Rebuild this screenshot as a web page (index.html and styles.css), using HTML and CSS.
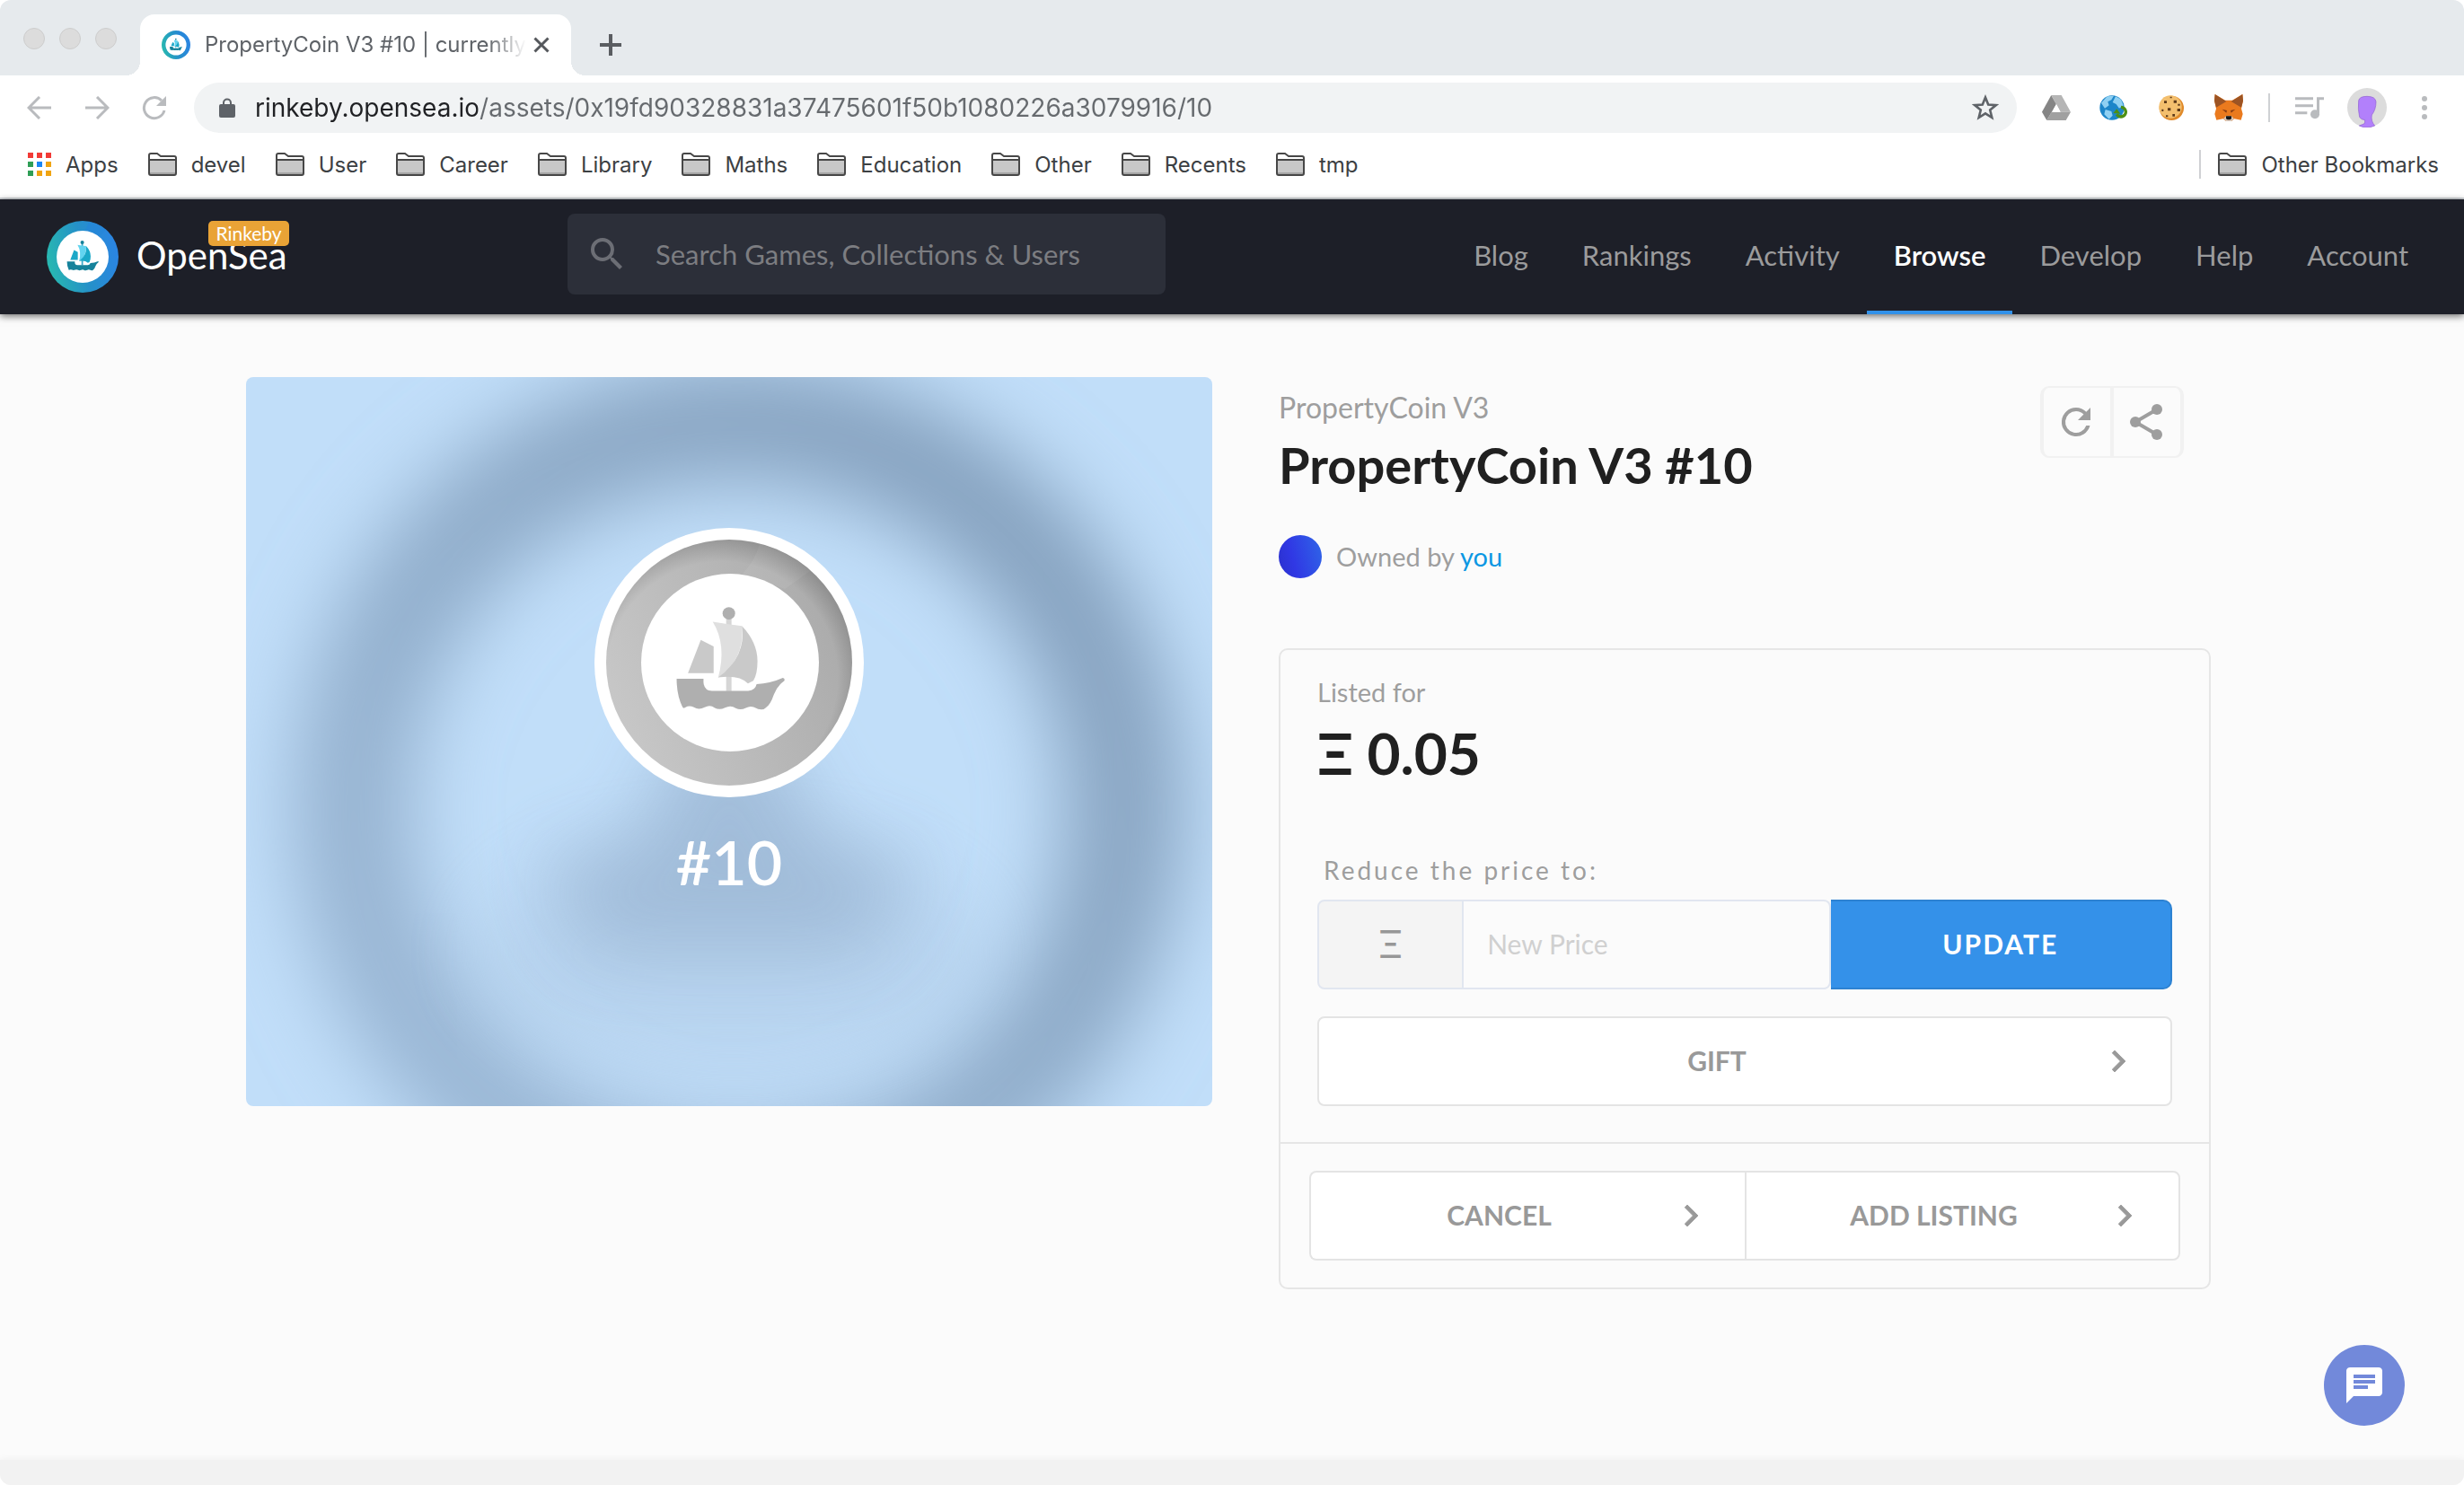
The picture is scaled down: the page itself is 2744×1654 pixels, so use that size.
FILE: index.html
```html
<!DOCTYPE html>
<html lang="en">
<head>
<meta charset="utf-8">
<meta name="viewport" content="width=device-width, initial-scale=1">
<title>PropertyCoin V3 #10 | OpenSea</title>
<link rel="stylesheet" href="styles.css">
</head>
<body>
<svg class="defs" aria-hidden="true">
  <symbol id="boat" viewBox="342 296 596 596">
    <path class="mast" d="M627 440h18v250h-18z"/>
    <circle class="hull" cx="636" cy="429" r="21"/>
    <path class="sail-light" d="M582 457q45 8 98 14q10 110-80 174q30-110-18-188z"/>
    <path class="sail" d="M680 471q52 55 52 118q0 45-14 66l-18 9q-30-30-100-20q95-70 80-173zM542 518l43 22v89h-86z"/>
    <path class="hull" d="M461 648h90v12q2 28 28 29h122q24-2 28-23q45-2 88-21q8 2 5 10q-25 18-35 46q-12 36-28 45q-12 12-38-2q-14-6-28 2q-18 9-34 1q-16-12-36-2q-18 9-34 1q-16-12-34-2q-20 10-36 0q-16-8-28 0q-6 5-10 0q-20-40-20-96z"/>
  </symbol>
  <symbol id="logo" viewBox="0 0 80 80">
    <circle cx="40" cy="40" r="40" fill="url(#ring)"/>
    <path d="M43 11L47 1A40 40 0 0 1 66 10L58 18z" fill="#2585d8" opacity=".6"/>
    <circle cx="40" cy="40" r="29" fill="#fff"/>
    <use href="#boat" x="11" y="11" width="58" height="58"/>
  </symbol>
  <symbol id="folder" viewBox="0 0 32 26">
    <path d="M1 23V3q0-2 2-2h7l4 3h15q2 0 2 2v17q0 2-2 2H3q-2 0-2-2z" fill="#fff"/>
    <path d="M2 8h28v16H2z" fill="#c8c8c8"/>
    <path d="M2 22h28v2H2z" fill="#a5a5a5"/>
    <path d="M1 8h30M1 23V3q0-2 2-2h7l4 3h15q2 0 2 2v17q0 2-2 2H3q-2 0-2-2z" fill="none" stroke="#474747" stroke-width="2"/>
  </symbol>
  <symbol id="chevron" viewBox="0 0 24 24">
    <path d="M8.6 16.6l4.6-4.6-4.6-4.6L10 6l6 6-6 6z" fill="currentColor" stroke="currentColor" stroke-width=".4"/>
  </symbol>
  <defs>
    <linearGradient id="ring" x1="0" y1=".6" x2="1" y2=".4">
      <stop offset="0" stop-color="#28b9b0"/><stop offset=".5" stop-color="#2591c8"/><stop offset="1" stop-color="#2b84e4"/>
    </linearGradient>
  </defs>
</svg>

<div class="window">
  <div class="tabstrip">
    <div class="lights"><i></i><i></i><i></i></div>
    <div class="tab">
      <svg class="favicon" width="32" height="32"><use href="#logo"/></svg>
      <span class="tab-title">PropertyCoin V3 #10 | currently</span>
      <button class="plain tab-close" aria-label="Close tab"><svg width="18" height="18" viewBox="0 0 18 18"><path d="M1.500 1.500l15 15M16.500 1.500l-15 15" stroke="#55585c" stroke-width="3"/></svg></button>
    </div>
    <button class="plain new-tab" aria-label="New tab"><svg width="24" height="24" viewBox="0 0 24 24"><path d="M12 0v24M0 12h24" stroke="#5a5d61" stroke-width="4"/></svg></button>
  </div>

  <div class="toolbar">
    <button class="plain tool" aria-label="Back"><svg width="28" height="26" viewBox="0 0 28 26" fill="none" stroke="#b9bbbe" stroke-width="3"><path d="M27 13H3M14 1L2 13l12 12"/></svg></button>
    <button class="plain tool" aria-label="Forward"><svg width="28" height="26" viewBox="0 0 28 26" fill="none" stroke="#b9bbbe" stroke-width="3"><path d="M1 13h24M14 1l12 12-12 12"/></svg></button>
    <button class="plain tool" aria-label="Reload"><svg width="28" height="28" viewBox="0 0 28 28"><path d="M25 17A11.500 11.500 0 1 1 22 6" fill="none" stroke="#b9bbbe" stroke-width="3"/><path d="M27 1v11H16z" fill="#b9bbbe"/></svg></button>
    <div class="address">
      <svg width="18" height="22" viewBox="0 0 18 22"><path d="M5 9V5.500a4 4 0 0 1 8 0V9" fill="none" stroke="#5f6368" stroke-width="2"/><rect y="7" width="18" height="15" rx="2" fill="#5f6368"/></svg>
      <input class="url" type="text" aria-label="Address" value="rinkeby.opensea.io/assets/0x19fd90328831a37475601f50b1080226a3079916/10">
      <button class="plain star" aria-label="Bookmark this page"><svg width="30" height="30" viewBox="0 0 30 30"><path d="M15 3.500l3.200 8 8.600.6-6.600 5.500 2.100 8.400-7.300-4.600L7.700 26l2.100-8.400-6.600-5.500 8.600-.6z" fill="none" stroke="#5f6368" stroke-width="2.600"/></svg></button>
    </div>
    <div class="extensions">
      <button class="plain tool" aria-label="Drive"><svg width="32" height="28" viewBox="72 48 96 84"><path d="M103 48l17 30-32 54-16-28z" fill="#858585"/><path d="M103 48h34l31 56h-34z" fill="#b5b5b5"/><path d="M104 104h64l-16 28H88z" fill="#a0a0a0"/><path d="M120 78l14 26h-28z" fill="#fff"/></svg></button>
      <button class="plain tool" aria-label="Proxy"><svg width="32" height="28" viewBox="264 48 96 84"><circle cx="306" cy="90" r="41" fill="#1d86c9"/><path d="M270 74l20-22 22-2-8 14-12 6 4 12-14 10zM318 52l18 10 8 20-14 10-10-14-12-6zM284 96l20 6 4 14-12 12-16-16z" fill="#8fd0f2"/><path d="M336 88a16 16 0 1 1-14 24" fill="none" stroke="#4d8f14" stroke-width="10"/><path d="M310 108l12-14 12 16z" fill="#4d8f14"/></svg></button>
      <button class="plain tool" aria-label="Cookies"><svg width="30" height="28" viewBox="459 49 90 84"><circle cx="505" cy="92" r="41" fill="#e08a2a"/><ellipse cx="501" cy="88" rx="38" ry="38" fill="#f3bf6e"/><path d="M480 68h9v8h-9zM512 66h10v9h-10zM492 92h10v9h-10zM524 94h10v9h-10zM472 96h6v7h-6zM508 112h8v8h-8zM486 116h7v6h-7zM526 78h7v6h-7zM500 54h6v5h-6z" fill="#5d3a1a"/></svg></button>
      <button class="plain tool" aria-label="MetaMask"><svg width="32" height="30" viewBox="648 44 96 90"><path d="M650 44l34 20h24l34-20 2 22-6 26 5 18-6 20-22-4-10 8h-18l-10-8-22 4-6-20 5-18-6-26z" fill="#ea7a1e"/><path d="M650 44l38 24-34 20-6-22zM742 44l-38 24 34 20 6-22z" fill="#9c5424"/><path d="M674 94l16 4-2 8zM718 94l-16 4 2 8z" fill="#8a3d12"/><path d="M678 126l10-10h16l10 10-9 8h-18z" fill="#d6c4b6"/><path d="M687 117h18v9l-5 3h-8l-5-3z" fill="#161616"/></svg></button>
      <span class="rule"></span>
      <button class="plain tool" aria-label="Media"><svg width="32" height="26" viewBox="918 50 96 78"><path d="M918 54h60v9h-60zM918 78h60v9h-60zM918 102h40v9h-40zM990 54h24v9h-15v46h-9z" fill="#b9bbbe"/><circle cx="984" cy="111" r="15" fill="#b9bbbe"/></svg></button>
      <button class="plain tool" aria-label="Profile"><svg width="44" height="44" viewBox="1092 24 132 132"><circle cx="1158" cy="90" r="66" fill="#dcdcdc"/><path d="M1130 66q2-14 28-14q28 0 30 18q0 26-14 44q-4 20 10 36q-28 12-52 0l16-6q4-4 3-13q-14-1-18-10q-6-26-3-55z" fill="#b280fb" stroke="#8f5fd0" stroke-width="2"/></svg></button>
      <button class="plain tool" aria-label="Menu"><svg width="6" height="26" viewBox="0 0 6 26" fill="#b9bbbe"><circle cx="3" cy="3" r="3"/><circle cx="3" cy="13" r="3"/><circle cx="3" cy="23" r="3"/></svg></button>
    </div>
  </div>

  <nav class="bookmarks" aria-label="Bookmarks">
    <a href="#"><svg class="apps" width="26" height="26" viewBox="0 0 26 26"><path d="M0 0h6v6H0zM10 0h6v6h-6zM20 0h6v6h-6z" fill="#f23a36"/><path d="M0 10h6v6H0zM0 20h6v6H0z" fill="#2f9e56"/><path d="M10 10h6v6h-6z" fill="#1a86f5"/><path d="M20 10h6v6h-6zM10 20h6v6h-6zM20 20h6v6h-6z" fill="#f0a412"/></svg>Apps</a>
    <a href="#"><svg width="32" height="26"><use href="#folder"/></svg>devel</a>
    <a href="#"><svg width="32" height="26"><use href="#folder"/></svg>User</a>
    <a href="#"><svg width="32" height="26"><use href="#folder"/></svg>Career</a>
    <a href="#"><svg width="32" height="26"><use href="#folder"/></svg>Library</a>
    <a href="#"><svg width="32" height="26"><use href="#folder"/></svg>Maths</a>
    <a href="#"><svg width="32" height="26"><use href="#folder"/></svg>Education</a>
    <a href="#"><svg width="32" height="26"><use href="#folder"/></svg>Other</a>
    <a href="#"><svg width="32" height="26"><use href="#folder"/></svg>Recents</a>
    <a href="#"><svg width="32" height="26"><use href="#folder"/></svg>tmp</a>
    <a href="#" class="other"><svg width="32" height="26"><use href="#folder"/></svg>Other Bookmarks</a>
  </nav>

  <div class="page">
    <header class="site-header">
      <a class="brand" href="#">
        <svg width="80" height="80"><use href="#logo"/></svg>
        <span class="brand-name">OpenSea<span class="network">Rinkeby</span></span>
      </a>
      <label class="search">
        <svg width="48" height="48" viewBox="0 0 24 24"><path d="M15.500 14h-.79l-.28-.27A6.470 6.470 0 0 0 16 9.500 6.500 6.500 0 1 0 9.500 16c1.610 0 3.090-.59 4.230-1.570l.27.28v.79l5 4.990L20.490 19zm-6 0C7.010 14 5 11.990 5 9.500S7.010 5 9.500 5 14 7.010 14 9.500 11.990 14 9.500 14z" fill="#6c6e75"/></svg>
        <input type="text" aria-label="Search" placeholder="Search Games, Collections &amp; Users">
      </label>
      <nav class="site-nav">
        <a href="#">Blog</a>
        <a href="#">Rankings</a>
        <a href="#">Activity</a>
        <a href="#" class="active">Browse</a>
        <a href="#">Develop</a>
        <a href="#">Help</a>
        <a href="#">Account</a>
      </nav>
    </header>

    <main class="asset">
      <figure class="artwork">
        <svg class="backdrop" viewBox="0 0 1076 812" preserveAspectRatio="xMidYMid slice" aria-hidden="true">
          <defs>
            <filter id="soft" x="-20%" y="-20%" width="140%" height="140%"><feGaussianBlur stdDeviation="44"/></filter>
            <filter id="softer" x="-40%" y="-40%" width="180%" height="180%"><feGaussianBlur stdDeviation="42"/></filter>
            <linearGradient id="halo" x1="0" y1="1" x2="1" y2="0"><stop offset="0" stop-color="#9dbad8"/><stop offset="1" stop-color="#819dba"/></linearGradient>
          </defs>
          <rect width="1076" height="812" fill="#c1def9"/>
          <circle cx="548" cy="480" r="430" fill="none" stroke="url(#halo)" stroke-width="130" filter="url(#soft)"/>
          <ellipse cx="540" cy="640" rx="280" ry="130" fill="#a2bcd8" opacity=".3" filter="url(#softer)"/>
          <path d="M335 530h90l80-170h60l90 170h90l-50 110H380z" fill="#9fbad7" opacity=".9" filter="url(#softer)"/>
        </svg>
        <svg class="coin" width="300" height="300" viewBox="-150 -150 300 300">
          <defs>
            <linearGradient id="metal" x1="0" y1=".7" x2="1" y2=".3"><stop offset="0" stop-color="#c8c8c8"/><stop offset="1" stop-color="#a9a9a9"/></linearGradient>
            <radialGradient id="rim" cx=".47" cy=".56" r=".56"><stop offset=".84" stop-color="#000" stop-opacity="0"/><stop offset="1" stop-color="#000" stop-opacity=".16"/></radialGradient>
          </defs>
          <circle r="150" fill="#fff"/>
          <circle r="137" fill="url(#metal)"/>
          <path d="M15-99Q28-112 34-132A137 137 0 0 1 90-102L62-82z" fill="#fff" opacity=".07"/>
          <circle r="137" fill="url(#rim)"/>
          <circle cx="1" r="99" fill="#fff"/>
          <use href="#boat" x="-98" y="-99" width="198" height="198"/>
        </svg>
        <figcaption>#10</figcaption>
      </figure>

      <section class="details">
        <div class="heading">
          <div class="titles">
            <a class="collection" href="#">PropertyCoin V3</a>
            <h1>PropertyCoin V3 #10</h1>
          </div>
          <div class="actions">
            <button class="plain" aria-label="Refresh"><svg width="48" height="48" viewBox="0 0 24 24"><path d="M17.650 6.350A7.960 7.960 0 0 0 12 4a8 8 0 1 0 7.730 10h-2.080A6 6 0 1 1 12 6c1.660 0 3.140.69 4.220 1.780L13 11h7V4z" fill="#9e9e9e"/></svg></button>
            <button class="plain" aria-label="Share"><svg width="48" height="48" viewBox="0 0 24 24"><path d="M18 5L6 12l12 7" fill="none" stroke="#9e9e9e" stroke-width="2"/><circle cx="18" cy="5" r="3" fill="#9e9e9e"/><circle cx="6" cy="12" r="3" fill="#9e9e9e"/><circle cx="18" cy="19" r="3" fill="#9e9e9e"/></svg></button>
          </div>
        </div>
        <p class="owner"><span class="avatar"></span><span>Owned by <a href="#">you</a></span></p>

        <div class="panel">
          <form class="panel-main">
            <p class="listed">Listed for</p>
            <p class="price">Ξ 0.05</p>
            <label class="reduce" for="new-price">Reduce the price to:</label>
            <div class="input-group">
              <span class="unit">Ξ</span>
              <input id="new-price" type="text" placeholder="New Price">
              <button class="update" type="button">UPDATE</button>
            </div>
            <button class="choice" type="button"><span>GIFT</span><svg width="48" height="48"><use href="#chevron"/></svg></button>
          </form>
          <div class="panel-foot">
            <button class="choice" type="button"><span>CANCEL</span><svg width="48" height="48"><use href="#chevron"/></svg></button>
            <button class="choice" type="button"><span>ADD LISTING</span><svg width="48" height="48"><use href="#chevron"/></svg></button>
          </div>
        </div>
      </section>
    </main>

    <button class="plain chat" aria-label="Chat"><svg width="48" height="48" viewBox="0 0 24 24"><path d="M20 2H4c-1.100 0-2 .9-2 2v18l4-4h14c1.100 0 2-.9 2-2V4c0-1.100-.9-2-2-2zM6 6h12v2H6zm8 8H6v-2h8zm4-3H6V9h12z" fill="#fff"/></svg></button>
  </div>
  <footer class="bottom-bar"></footer>
</div>
</body>
</html>
```

FILE: styles.css
```css
* { box-sizing: border-box; }

body {
  margin: 0;
  background: #fff;
  font-family: Lato, "Open Sans", sans-serif;
  color: #202020;
}

p, h1, figure { margin: 0; }
a { color: inherit; text-decoration: none; }
svg { display: block; flex: none; }
button, input { font-family: inherit; }

.plain { border: 0; padding: 0; background: none; display: grid; place-items: center; }
.defs { position: absolute; width: 0; height: 0; }

.window {
  display: flex;
  flex-direction: column;
  min-height: 100vh;
  border-radius: 12px;
  overflow: hidden;
  --mast: #3aa9c9;
  --hull: #15829b;
  --sail: #1ba8c8;
  --sail-light: #62d4f0;
}

.mast { fill: var(--mast); }
.hull { fill: var(--hull); }
.sail { fill: var(--sail); }
.sail-light { fill: var(--sail-light); }

/* Browser chrome */
.tabstrip, .toolbar, .bookmarks { font-family: Inter, Roboto, sans-serif; flex: none; }

.tabstrip {
  display: flex;
  align-items: flex-end;
  height: 84px;
  background: #e6eaed;
}

.lights { display: flex; gap: 16px; width: 156px; padding-left: 26px; align-self: flex-start; margin-top: 31px; }
.lights i { width: 24px; height: 24px; border-radius: 50%; background: #dcdcdc; border: 1px solid #cdcdcd; }

.tab {
  position: relative;
  display: flex;
  align-items: center;
  width: 480px;
  height: 68px;
  padding: 0 24px 0 24px;
  border-radius: 16px 16px 0 0;
  background: #fff;
}
.tab::before, .tab::after {
  content: "";
  position: absolute;
  bottom: 0;
  width: 16px;
  height: 16px;
}
.tab::before { left: -16px; background: radial-gradient(circle at 0 0, #e6eaed 16px, #fff 16px); }
.tab::after { right: -16px; background: radial-gradient(circle at 100% 0, #e6eaed 16px, #fff 16px); }

.tab-title {
  flex: 1;
  margin: 0 8px 0 16px;
  overflow: hidden;
  white-space: nowrap;
  font-size: 24px;
  line-height: 32px;
  color: #5f6368;
  -webkit-mask-image: linear-gradient(to right, #000 88%, transparent);
  mask-image: linear-gradient(to right, #000 88%, transparent);
}
.new-tab { width: 88px; height: 68px; }

.toolbar { display: flex; align-items: center; height: 72px; padding: 0 12px; background: #fff; }
.tool { width: 64px; height: 56px; }

.address {
  flex: 1;
  display: flex;
  align-items: center;
  height: 56px;
  margin: 0 12px;
  padding: 0 20px 0 28px;
  border-radius: 28px;
  background: #f1f3f4;
}
.url {
  flex: 1;
  margin-left: 22px;
  padding: 0;
  border: 0;
  outline: 0;
  font-size: 28px;
  color: transparent;
  background: linear-gradient(to right, #202124 248px, #666a6e 248px);
  -webkit-background-clip: text;
  background-clip: text;
}
.extensions { display: flex; align-items: center; }
.rule { width: 2px; height: 32px; margin: 0 12px; background: #cfd1d4; }

.bookmarks {
  display: flex;
  gap: 33px;
  height: 66px;
  padding: 0 28px 10px 31px;
  background: #fff;
  border-bottom: 2px solid #d3d6da;
  font-size: 24px;
  color: #3c4043;
}
.bookmarks a { display: flex; align-items: center; gap: 16px; white-space: nowrap; }
.bookmarks .other { margin-left: auto; }
.bookmarks .other::before { content: ""; width: 2px; height: 32px; background: #cfd1d4; margin-right: 3px; }

/* Site */
.page { position: relative; flex: 1; background: #fbfbfb; }

.site-header {
  display: flex;
  align-items: center;
  height: 128px;
  padding: 0 32px 0 52px;
  background: #1d1f28;
  box-shadow: 0 2px 8px rgba(0, 0, 0, .6);
}

.brand { flex: 0 0 580px; display: flex; align-items: center; gap: 20px; color: #fff; }
.brand-name { position: relative; margin-bottom: 4px; font-size: 42px; line-height: 48px; }
.network {
  position: absolute;
  right: -2px;
  top: -14px;
  padding: 0 8px;
  border-radius: 5px;
  background: #e9a336;
  font-size: 21px;
  line-height: 28px;
}

.search {
  flex: 0 1 666px;
  display: flex;
  align-items: center;
  gap: 30px;
  height: 90px;
  margin-bottom: 6px;
  padding: 0 20px;
  border-radius: 8px;
  background: #2c2f39;
}
.search input { flex: 1; min-width: 0; border: 0; padding: 0; background: none; outline: 0; font-size: 31px; color: #fff; }
.search input::placeholder { color: #7c7d81; opacity: 1; }

.site-nav { display: flex; align-self: stretch; margin-left: auto; font-size: 31px; color: #9b9b9c; }
.site-nav a { display: flex; align-items: center; padding: 0 30px; border-bottom: 4px solid transparent; }
.site-nav .active { color: #fff; font-weight: 600; border-color: #3291e9; }

.asset {
  display: grid;
  grid-template-columns: 1076fr 1038fr;
  gap: 74px;
  align-items: start;
  padding: 70px 282px 70px 274px;
}

.artwork {
  position: relative;
  display: flex;
  flex-direction: column;
  align-items: center;
  height: 812px;
  padding-top: 168px;
  border-radius: 8px;
  overflow: hidden;
}
.backdrop { position: absolute; inset: 0; width: 100%; height: 100%; }
.coin {
  position: relative;
  --mast: #d6d6d6;
  --hull: #afafaf;
  --sail: #c9c9c9;
  --sail-light: #dfdfdf;
}
.artwork figcaption { position: relative; margin-top: 30px; font-size: 68px; line-height: 84px; font-weight: 600; color: #fff; }

.heading { display: flex; justify-content: space-between; align-items: flex-start; padding: 10px 30px 0 0; }
.titles { padding-top: 2px; }
.collection { display: block; font-size: 32px; line-height: 44px; color: #9e9e9e; }
h1 { margin-top: 8px; font-size: 56px; line-height: 68px; font-weight: 700; }

.actions { display: flex; height: 80px; border: 2px solid #f1f1f1; border-width: 2px 4px; border-radius: 10px; }
.actions button { width: 74px; padding-right: 2px; }
.actions button + button { width: 78px; border-left: 4px solid #f1f1f1; }

.owner { display: flex; align-items: center; gap: 16px; margin-top: 44px; font-size: 29px; line-height: 48px; color: #9e9e9e; }
.owner a { color: #0b97e3; }
.avatar { width: 48px; height: 48px; border-radius: 50%; background: linear-gradient(75deg, #2a30cc, #3038e4 35%, #2f66e8); }

.panel { margin-top: 78px; border: 2px solid #e6e6e6; border-radius: 10px; }
.panel-main { display: flex; flex-direction: column; padding: 30px 41px 40px 41px; border-bottom: 2px solid #e6e6e6; }
.listed { font-size: 29px; line-height: 34px; color: #9e9e9e; }
.price { margin-top: 13px; font-size: 64px; line-height: 76px; font-weight: 700; }
.reduce { margin: 76px 0 17px 7px; font-size: 28px; line-height: 32px; letter-spacing: 3px; color: #9e9e9e; }

.input-group { display: grid; grid-template-columns: 163fr 408fr 380fr; height: 100px; }
.unit {
  display: grid;
  place-items: center;
  padding-bottom: 2px;
  border: 2px solid #e1e6f0;
  border-radius: 8px 0 0 8px;
  background: #f4f4f4;
  font-size: 42px;
  color: #979797;
}
.input-group input {
  min-width: 0;
  padding: 0 26px 2px;
  border: 2px solid #e1e6f0;
  border-left: 0;
  border-radius: 0 8px 8px 0;
  background: #fbfbfb;
  font-size: 30px;
}
.input-group input::placeholder { color: #d0d0d0; opacity: 1; }
.update {
  padding-bottom: 3px;
  border: 2px solid #2d82d2;
  border-left: 0;
  border-radius: 0 10px 10px 0;
  background: #3491e9;
  font-size: 30px;
  font-weight: 700;
  letter-spacing: 2px;
  color: #fff;
}

.choice {
  display: flex;
  align-items: center;
  height: 100px;
  padding: 0 34px 0 20px;
  border: 2px solid #e4e4e4;
  border-radius: 8px;
  background: #fff;
  font-size: 30px;
  font-weight: 700;
  color: #999;
}
.choice span { flex: 1; padding-bottom: 2px; text-align: center; }
.panel-main .choice { margin-top: 30px; }

.panel-foot { display: grid; grid-template-columns: 1fr 1fr; padding: 30px 32px; }
.panel-foot .choice { padding-right: 36px; }
.panel-foot .choice:first-child { border-radius: 8px 0 0 8px; border-right: 0; }
.panel-foot .choice:last-child { border-radius: 0 8px 8px 0; }

.chat {
  position: absolute;
  right: 66px;
  bottom: 38px;
  width: 90px;
  height: 90px;
  border-radius: 50%;
  background: #7289da;
}

.bottom-bar { position: relative; flex: none; height: 28px; background: #f2f2f2; box-shadow: 0 0 8px rgba(0, 0, 0, .06); }
```
